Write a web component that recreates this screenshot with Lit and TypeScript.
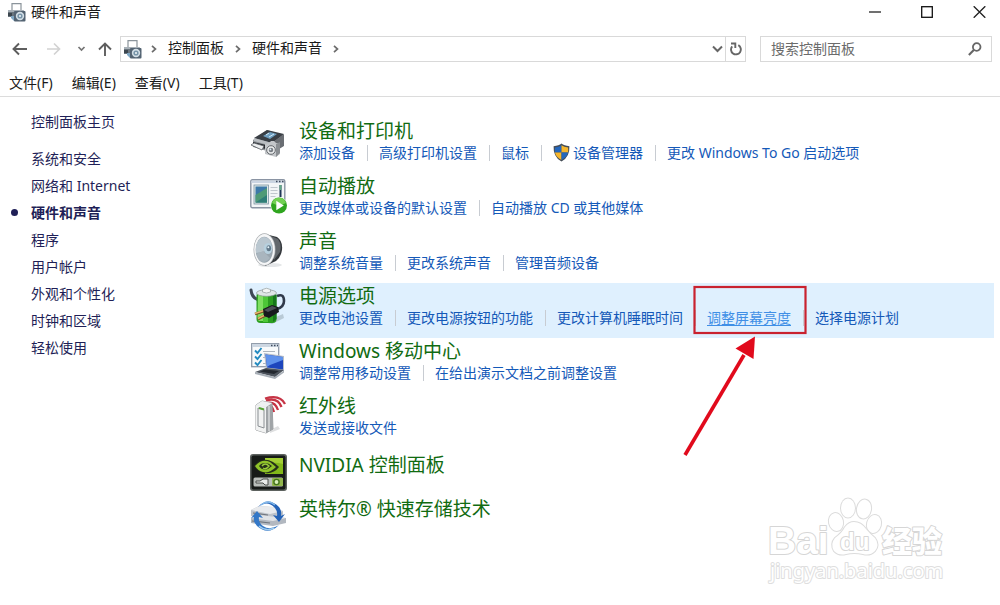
import { LitElement, html, css, svg, nothing } from "lit";
import { customElement, property } from "lit/decorators.js";

interface Task {
  label: string;
  shield?: boolean;
  marked?: boolean;
}
interface Category {
  icon: string;
  title: string;
  tasks: Task[];
}

const categories: Category[] = [
  {
    icon: "devices",
    title: "设备和打印机",
    tasks: [
      { label: "添加设备" },
      { label: "高级打印机设置" },
      { label: "鼠标" },
      { label: "设备管理器", shield: true },
      { label: "更改 Windows To Go 启动选项" },
    ],
  },
  {
    icon: "autoplay",
    title: "自动播放",
    tasks: [{ label: "更改媒体或设备的默认设置" }, { label: "自动播放 CD 或其他媒体" }],
  },
  {
    icon: "sound",
    title: "声音",
    tasks: [{ label: "调整系统音量" }, { label: "更改系统声音" }, { label: "管理音频设备" }],
  },
  {
    icon: "power",
    title: "电源选项",
    tasks: [
      { label: "更改电池设置" },
      { label: "更改电源按钮的功能" },
      { label: "更改计算机睡眠时间" },
      { label: "调整屏幕亮度", marked: true },
      { label: "选择电源计划" },
    ],
  },
  {
    icon: "mobility",
    title: "Windows 移动中心",
    tasks: [{ label: "调整常用移动设置" }, { label: "在给出演示文档之前调整设置" }],
  },
  { icon: "infrared", title: "红外线", tasks: [{ label: "发送或接收文件" }] },
  { icon: "nvidia", title: "NVIDIA 控制面板", tasks: [] },
  { icon: "intel", title: "英特尔® 快速存储技术", tasks: [] },
];

const sections = [
  "系统和安全",
  "网络和 Internet",
  "硬件和声音",
  "程序",
  "用户帐户",
  "外观和个性化",
  "时钟和区域",
  "轻松使用",
];

const icons: Record<string, unknown> = {
  devices: svg`<g transform="translate(0 2)">
    <path d="M3 16 17 6 33 11 33 22 24 29 3 23Z" fill="#8d9196"/>
    <path d="M4 14 17 6 34 10 22 19Z" fill="#3a3f45"/>
    <path d="M13 12 20 8 27 10 20 15Z" fill="#6f9fc0"/>
    <path d="M16 11 19 9M19 13 24 10" stroke="#d4ebf7" stroke-width="1"/>
    <path d="M4 14 22 19V22L4 17Z" fill="#b9bdc1"/>
    <path d="M22 19 34 10V22L22 29Z" fill="#6a6e73"/>
    <path d="M3 18 16 21V25L3 22Z" fill="#24272b"/>
    <path d="M1 21 4 19 14 22 12 26Z" fill="#eceeef" stroke="#5c6064" stroke-width=".8"/>
    <path d="M15 20 19 19 21 17 24 17 26 19 30 19V30L26 33 15 30Z" fill="#c3c6c9"/>
    <path d="M26 20 30 18V29L26 33Z" fill="#8a8e92"/>
    <circle cx="21" cy="26" r="4.3" fill="#eceeef" stroke="#63676b"/>
    <circle cx="21" cy="26" r="2.3" fill="#777c82"/>
    <circle cx="20.4" cy="25.4" r=".9" fill="#dceaf3"/></g>`,
  autoplay: svg`
    <rect x=".8" y="2.8" width="34" height="28" rx="1.5" fill="#f3f5f7" stroke="#8a94a3" stroke-width="1.4"/>
    <path d="M1.500 3.500H34V6H1.500Z" fill="#cbd5e2"/>
    <path d="M26 4.500h1.500M29 4.500h1.500M32 4.500h1.500" stroke="#3f4a5c" stroke-width="1.4"/>
    <rect x="4" y="8" width="14.500" height="19" fill="#dfe8e6" stroke="#7c94a2" stroke-width=".8"/>
    <rect x="5.500" y="9.500" width="11.500" height="16" fill="#3d79a8"/>
    <path d="M5.500 25.500V18L17 11V25.500Z" fill="#4f9a76"/>
    <path d="M5.500 25.500 17 18V25.500Z" fill="#2f7d77"/>
    <path d="M20.500 10.500h7M20.500 13.500h7M20.500 16.500h7M20.500 19.500h5" stroke="#c1c7ce"/>
    <path d="M30.500 8V20" stroke="#1f3657" stroke-width="2"/>
    <path d="M30.500 8V13" stroke="#62a887" stroke-width="2"/>
    <circle cx="29" cy="28.500" r="8.500" fill="#fff"/>
    <circle cx="29" cy="28.500" r="8" fill="#2fa51f"/>
    <path d="M22 26a7.300 7.300 0 0 1 14 0Q29 30 22 26Z" fill="#72d053"/>
    <path d="M26.300 23.800V33.200L33.800 28.500Z" fill="#fff"/>`,
  sound: svg`
    <ellipse cx="20" cy="33" rx="12" ry="2" fill="#e4e6e8"/>
    <path d="M15 2 27 5Q33 9 32 18 31 25 26 29L15 34Z" fill="#34383c"/>
    <path d="M21 4 28 7Q32 12 30 20L24 28Z" fill="#62676c"/>
    <ellipse cx="14.500" cy="17.500" rx="11" ry="16.200" fill="#a9adb0"/>
    <ellipse cx="14.500" cy="17.500" rx="10.300" ry="15.400" fill="#f5f6f7"/>
    <ellipse cx="14.300" cy="17.700" rx="8.600" ry="13" fill="#99a5ae"/>
    <path d="M6 14Q9 5 14 5T22 12L13 20 6 21Z" fill="#bac7d0"/>
    <path d="M6 22 13 19 20 26Q14 33 9 28Z" fill="#a9b5be"/>
    <ellipse cx="18" cy="16.500" rx="4.200" ry="5.600" fill="#b7d0de"/>
    <ellipse cx="18.800" cy="16.200" rx="2.300" ry="3" fill="#63798a"/>
    <circle cx="18.300" cy="15.300" r="1" fill="#e6f5fc"/>`,
  power: svg`
    <path d="M14 35 33 27 34 31 22 37Z" fill="#b9cad6"/>
    <path d="M1 3Q2 12 10 13" fill="none" stroke="#3e4855" stroke-width="3" stroke-linecap="round"/>
    <path d="M27 9Q34 6 34 14 34 20 27 22" fill="none" stroke="#30394a" stroke-width="2.600"/>
    <rect x="6.500" y="5" width="20" height="31" rx="4" fill="#2b9e20"/>
    <path d="M8 8H13V34H9Q7.500 33 7.500 30Z" fill="#7fdf62"/>
    <path d="M13 8H18V35H13Z" fill="#4dc738"/>
    <path d="M23 8H26.500V32L23 35Z" fill="#16771a"/>
    <ellipse cx="16.500" cy="6" rx="10" ry="3.300" fill="#dfe6e6" stroke="#8b9696" stroke-width=".7"/>
    <path d="M12.500 5V2.500Q16.500 0 20.500 2.500V5Q16.500 7 12.500 5Z" fill="#f4f6f6" stroke="#929c9c" stroke-width=".7"/>
    <path d="M5 27 14 24M8 32 16 28" stroke="#7b4c22" stroke-width="2.800"/>
    <path d="M5 26.500 14 23.500M8 31.500 16 27.500" stroke="#e4b56c" stroke-width="1.600"/>
    <path d="M13 22 22 18 28 20 29 25 19 31 14 29Z" fill="#17191d"/>
    <path d="M14 23 22 19 27 21 18 25Z" fill="#4b5057"/>`,
  mobility: svg`
    <rect x="1.700" y="1.700" width="27" height="23" fill="#f8fafb" stroke="#8e99a8" stroke-width="1.300"/>
    <path d="M2 2H28.500V5H2Z" fill="#ccd6e1"/>
    <path d="M21 3.500h1.500M24 3.500h1.500M27 3.500h1" stroke="#3f4a5c" stroke-width="1.300"/>
    <path d="M13 9.500H25M13 15.500H22M13 21.500H20" stroke="#adb5be"/>
    <path d="M5 8.500 7.500 11 11.500 6M5 14.500 7.500 17 11.500 12M5 20.500 7.500 23 11.500 18" fill="none" stroke="#238ac0" stroke-width="1.900"/>
    <path d="M14 11 34 14V29L16 27Z" fill="#b9bfc7"/>
    <path d="M15.500 12.500 33 15V27.500L17 25.500Z" fill="#1d45bd"/>
    <path d="M15.500 12.500 33 15V18L20 23 17 25Z" fill="#5f92ec"/>
    <path d="M16 26 34 28 25 35 5 30Z" fill="#4c535c"/>
    <path d="M15 27.500 29 29 24 32 10 29.500Z" fill="#23282f"/>
    <path d="M5 30 25 35 34 28.500V30.500L25 37 5 32Z" fill="#a8afb7"/>`,
  infrared: svg`
    <path d="M20 33 28 29 30 32 20 36Z" fill="#dedfe0"/>
    <path d="M19 9Q22 8 24 15M17 6Q25 4 28 13M16 3.500Q28 0 31.500 10M15 1.500Q30-3 35 7" fill="none" stroke="#c63445" stroke-width="2.300"/>
    <path d="M6 8 12 4 22 6 23 32 16 36 6 33Z" fill="#d9dbdc" stroke="#85898c" stroke-width=".8"/>
    <path d="M6 8 16 10V36L6 33Z" fill="#f1f2f2"/>
    <path d="M16 10 22 6 23 32 16 36Z" fill="#a0a4a7"/>
    <path d="M19 9V34" stroke="#d6d8da" stroke-width="1.500"/>
    <path d="M6 8 12 4 22 6 16 10Z" fill="#eff1f2"/>
    <path d="M8 11 14 12.500V31L8 29Z" fill="none" stroke="#8b9094"/>
    <path d="M9 11 14 12.500" stroke="#56a434" stroke-width="2"/>`,
  nvidia: svg`
    <rect width="37" height="37" rx="3" fill="#5d625f"/>
    <rect x="1.500" y="1.500" width="34" height="34" rx="2" fill="#171b18"/>
    <path d="M15 4H33V20H15Z" fill="#83b81a"/>
    <path d="M15 4H33V10Q23 7 15 11Z" fill="#a3cf35"/>
    <path d="M4 12Q12 2 23 8 26 10 29 13 24 20 15 19 8 18 4 12Z" fill="#253019"/>
    <path d="M5 12Q12 4 20 8L26 13Q19 20 13 18 8 17 5 12ZM9 12Q12 17 18 15L22 12Q17 7 11 10Z" fill="#8fc329" fill-rule="evenodd"/>
    <path d="M12 12Q15 8 19 12 16 16 13 14" fill="none" stroke="#9ace3a" stroke-width="1.400"/>
    <rect x="3.500" y="23.500" width="29.500" height="9" rx="1.500" fill="#b9beba"/>
    <rect x="22" y="24" width="11" height="8" rx="1" fill="#92b64d"/>
    <path d="M6 27H10L13 25H18V31H15L13 29H6Z" fill="#e9ecea" stroke="#4a4e4b"/>
    <circle cx="26.500" cy="28" r="2.600" fill="#d8eeb7" stroke="#43721b" stroke-width="1.400"/>`,
  intel: svg`<g transform="translate(0 2)">
    <path d="M1 10 9 6 23 7 33 11V16L22 19 1 16Z" fill="#bec3ca"/>
    <path d="M1 10 9 6 23 7 33 11 20 14Z" fill="#e8eaed"/>
    <path d="M1 18 9 15 36 18V23L23 26 1 23Z" fill="#b2b8c0"/>
    <path d="M1 18 9 15 36 18 23 21Z" fill="#e0e3e7"/>
    <path d="M2 21 20 23M3 13 18 15" stroke="#70767e" stroke-width="1.200"/>
    <path d="M8 7Q18-4 29 7 32 11 31 16L35 14 29 22 23 15 27 16Q28 11 24 7 17 0 8 7Z" fill="#2563b7"/>
    <path d="M11 5Q18-1 25 5" fill="none" stroke="#83b9eb" stroke-width="1.400"/>
    <path d="M29 25Q18 36 7 26 3 22 4 17L1 18 7 11 13 18 9 17Q8 22 13 26 20 31 29 25Z" fill="#3478c7"/>
    <path d="M9 26Q16 32 24 28" fill="none" stroke="#a0cdef" stroke-width="1.400"/></g>`,
};

const printerIcon = html`<svg class="app-icon" viewBox="0 0 19 19" width="19" height="19" aria-hidden="true">
  <path d="M5 7V.7H14V7" fill="#fff" stroke="#8b949b" stroke-width="1.200"/>
  <path d="M1 7H16L18 9V14H1Z" fill="#69747d"/>
  <path d="M1 7H16V9H1Z" fill="#a7b0b7"/>
  <path d="M1 10H5V13H1Z" fill="#3c464e"/>
  <path d="M4 13H8V18H4Z" fill="#7ea6c3"/>
  <path d="M4 15 7 18H4Z" fill="#fff"/>
  <rect x="7" y="8" width="11.500" height="10.500" rx="1" fill="#536372"/>
  <circle cx="13" cy="13" r="4.200" fill="#d2dee6"/>
  <circle cx="13" cy="13" r="2.600" fill="#7895a9"/>
  <circle cx="13" cy="13" r="1" fill="#f1f7fa"/>
</svg>`;

const crumbArrow = html`<svg class="crumb-arrow" viewBox="0 0 6 8" width="6" height="8" aria-hidden="true">
  <path d="M1 .8 4.500 4 1 7.200" fill="none" stroke="#6c6c6c" stroke-width="1.700"/>
</svg>`;

const shieldIcon = html`<svg class="shield" viewBox="0 0 17 19" width="17" height="19" aria-hidden="true">
  <path d="M8.500.6Q11 3 16.400 3.200 17 14 8.500 18.400 0 14 .6 3.200 6 3 8.500.6Z" fill="#454d57"/>
  <path d="M8.500 2.200V9.500H1.900Q1.700 7 1.900 4.500 6 4 8.500 2.200Z" fill="#2467bd"/>
  <path d="M8.500 2.200Q11 4 15.100 4.500 15.300 7 15.100 9.500H8.500Z" fill="#f6b62c"/>
  <path d="M1.900 9.500H8.500V17Q3 14 1.900 9.500Z" fill="#f6b62c"/>
  <path d="M8.500 9.500H15.100Q14 14 8.500 17Z" fill="#2467bd"/>
</svg>`;

@customElement("title-bar")
class TitleBar extends LitElement {
  static styles = css`
    :host { display: flex; justify-content: space-between; height: 24px; padding: 0 7px; }
    .caption { display: flex; align-items: center; gap: 5px; margin: 0; font-size: 14px; line-height: 24px; height: 24px; font-weight: 400; }
    .controls { display: flex; }
    .control { width: 52px; border: 0; padding: 0; background: none; display: grid; place-items: center; }
    .control:last-child { width: 28px; margin-left: 12px; }
  `;
  render() {
    return html`
      <h1 class="caption">${printerIcon}硬件和声音</h1>
      <div class="controls">
        <button class="control" aria-label="最小化">
          <svg width="12" height="12" viewBox="0 0 12 12"><path d="M0 6H12" stroke="#222" stroke-width="1.300"/></svg>
        </button>
        <button class="control" aria-label="最大化">
          <svg width="12" height="12" viewBox="0 0 12 12"><rect x=".7" y=".7" width="10.600" height="10.600" fill="none" stroke="#111" stroke-width="1.300"/></svg>
        </button>
        <button class="control" aria-label="关闭">
          <svg width="13" height="12" viewBox="0 0 13 12"><path d="M.7.2 12.300 11.800M12.300.2.7 11.800" stroke="#222" stroke-width="1.300"/></svg>
        </button>
      </div>
    `;
  }
}

@customElement("address-row")
class AddressRow extends LitElement {
  static styles = css`
    :host { display: flex; align-items: center; padding: 12px 8px 0 12px; }
    button { border: 0; padding: 0; background: none; display: grid; place-items: center; }
    .history { display: grid; grid-template-columns: 34px 24px 24px 26px; height: 26px; }
    .history button { justify-items: start; }
    .address {
      flex: 1; display: flex; align-items: center; box-sizing: border-box; height: 26px;
      border: 1px solid #d9d9d9; padding-left: 2px; margin-right: 14px;
    }
    .crumbs { flex: 1; display: flex; align-items: center; gap: 11px; }
    .crumbs a { color: #1a1a1a; text-decoration: none; line-height: 22px; height: 24px; padding-right: 2px; }
    .crumb-arrow { margin-left: -2px; }
    .drop { width: 16px; height: 24px; }
    .refresh { width: 20px; height: 24px; border-left: 1px solid #d9d9d9; }
    .search {
      display: flex; align-items: center; justify-content: space-between; box-sizing: border-box;
      width: 232px; height: 26px; border: 1px solid #d9d9d9; padding: 0 9px 0 10px;
    }
    .search input {
      flex: 1; min-width: 0; border: 0; padding: 0; outline: 0; background: none;
      font: inherit; line-height: 20px; color: #333;
    }
    .search input::placeholder { color: #6b6b6b; opacity: 1; }
  `;
  render() {
    return html`
      <nav class="history" aria-label="导航">
        <button aria-label="后退">
          <svg width="15" height="14" viewBox="0 0 15 14"><path d="M15 7H1.500M7 1.500 1.500 7 7 12.500" fill="none" stroke="#5e5e5e" stroke-width="1.900"/></svg>
        </button>
        <button aria-label="前进">
          <svg width="15" height="14" viewBox="0 0 15 14"><path d="M1 7H13.500M8 1.500 13.500 7 8 12.500" fill="none" stroke="#d2d2d2" stroke-width="1.700"/></svg>
        </button>
        <button aria-label="最近浏览的位置">
          <svg width="16" height="6" viewBox="0 0 16 6"><path d="M8.500 1 11.500 4 14.500 1" fill="none" stroke="#757575" stroke-width="1.700"/></svg>
        </button>
        <button aria-label="上移">
          <svg width="22" height="14" viewBox="0 0 22 14"><path d="M11 14V1.500M5 7.500 11 1.500 17 7.500" fill="none" stroke="#5e5e5e" stroke-width="1.900"/></svg>
        </button>
      </nav>
      <div class="address">
        <nav class="crumbs" aria-label="地址">
          ${printerIcon}${crumbArrow}<a href="#">控制面板</a>${crumbArrow}<a href="#">硬件和声音</a>${crumbArrow}
        </nav>
        <button class="drop" aria-label="以前的位置">
          <svg width="11" height="8" viewBox="0 0 11 8"><path d="M1 1.500 5.500 6 10 1.500" fill="none" stroke="#666" stroke-width="2"/></svg>
        </button>
        <button class="refresh" aria-label="刷新">
          <svg width="13" height="14" viewBox="0 0 13 14"><path d="M9.300 3.200A4.900 4.900 0 1 1 3.200 4.300M2 1.500H6.300V6" fill="none" stroke="#666" stroke-width="1.900"/></svg>
        </button>
      </div>
      <label class="search">
        <input type="search" placeholder="搜索控制面板" aria-label="搜索控制面板" />
        <svg width="14" height="14" viewBox="0 0 14 14"><circle cx="8.700" cy="5" r="3.800" fill="none" stroke="#666" stroke-width="1.800"/><path d="M6 7.800.9 13" stroke="#666" stroke-width="2.100"/></svg>
      </label>
    `;
  }
}

@customElement("section-list")
class SectionList extends LitElement {
  static styles = css`
    :host { display: block; padding-left: 31px; line-height: 27px; }
    a { color: #1f1f57; text-decoration: none; }
    .home { display: block; margin: 11px 0 10px; }
    ul { list-style: none; margin: 0; padding: 0; }
    .current { font-weight: 700; position: relative; }
    .current::before {
      content: ""; position: absolute; left: -20px; top: 10px; width: 7px; height: 7px;
      border-radius: 50%; background: #1f1f57;
    }
  `;
  render() {
    return html`
      <a class="home" href="#">控制面板主页</a>
      <ul>
        ${sections.map(
          (name) => html`<li class=${name === "硬件和声音" ? "current" : ""}><a href="#">${name}</a></li>`
        )}
      </ul>
    `;
  }
}

@customElement("category-row")
class CategoryRow extends LitElement {
  @property({ attribute: false }) category!: Category;
  static styles = css`
    :host { display: block; }
    .row { display: grid; grid-template-columns: 37px 1fr; column-gap: 12px; padding: 2px 0 9px 5px; }
    .row .icon { padding-top: 2px; }
    .single { padding: 6px 0 16px 5px; }
    .single .icon { padding-top: 0; }
    .selected { background: #dff0fe; }
    .icon { height: 0; overflow: visible; }
    .icon svg { display: block; overflow: visible; }
    h2 { margin: 0; font-size: 19px; line-height: 22px; font-weight: 400; }
    h2 a { color: #116b11; text-decoration: none; }
    .tasks { display: flex; margin: 0; padding: 0; list-style: none; line-height: 22px; white-space: nowrap; }
    .tasks li { display: flex; align-items: center; }
    .tasks li + li::before { content: ""; width: 1px; height: 16px; margin: 0 11px 0 12px; background: #c8ccd2; }
    .tasks a { display: flex; align-items: center; gap: 3px; color: #1459b8; text-decoration: none; }
    .shield { margin-top: -2px; }
    .marked { position: relative; }
    .tasks .marked a { color: #3f8fe6; text-decoration: underline; text-underline-offset: 2px; }
    .callout { position: absolute; left: 0; top: -21px; pointer-events: none; overflow: visible; z-index: 1; }
  `;
  render() {
    const { icon, title, tasks } = this.category;
    const selected = tasks.some((t) => t.marked);
    return html`
      <section class="row ${tasks.length ? "" : "single"} ${selected ? "selected" : ""}">
        <div class="icon">
          <svg width="37" height="37" viewBox="0 0 37 37" aria-hidden="true">${icons[icon]}</svg>
        </div>
        <div>
          <h2><a href="#">${title}</a></h2>
          ${tasks.length
            ? html`<ul class="tasks">
                ${tasks.map(
                  (t) => html`<li class=${t.marked ? "marked" : ""}>
                    <a href="#">${t.shield ? shieldIcon : nothing}${t.label}</a>
                    ${t.marked
                      ? html`<svg class="callout" width="126" height="172" viewBox="0 0 126 172" aria-hidden="true">
                          <rect x="11.500" y="1" width="111" height="46" fill="none" stroke="#c9222f" stroke-width="2.200"/>
                          <path d="M2 169 61 69" stroke="#e10a1c" stroke-width="3.600"/>
                          <path d="M72 50.500 70.500 73 52.500 62.500Z" fill="#e10a1c"/>
                        </svg>`
                      : nothing}
                  </li>`
                )}
              </ul>`
            : nothing}
        </div>
      </section>
    `;
  }
}

@customElement("site-watermark")
class SiteWatermark extends LitElement {
  static styles = css`
    :host { position: absolute; right: 50px; bottom: 20px; pointer-events: none; }
    svg { display: block; }
    text, .paw { fill: #fff; stroke: #d6d6d6; stroke-width: 2px; paint-order: stroke; stroke-linejoin: round; }
    .paw { stroke: #dcdcdc; }
    .latin { font: bold 39px "Liberation Sans", sans-serif; }
    .inner { font: bold 24px "Liberation Sans", sans-serif; }
    .han { font: 900 30px "Noto Sans CJK SC", sans-serif; }
    .domain { font: 20px "Noto Sans", sans-serif; stroke: #dedede; }
  `;
  render() {
    return html`<svg width="184" height="92" viewBox="0 4 184 92" aria-hidden="true">
      <ellipse class="paw" cx="70" cy="33" rx="7" ry="9" transform="rotate(-12 70 33)"/>
      <ellipse class="paw" cx="82" cy="19" rx="7" ry="9.500"/>
      <ellipse class="paw" cx="98" cy="20" rx="7" ry="9.500" transform="rotate(10 98 20)"/>
      <ellipse class="paw" cx="108" cy="35" rx="7" ry="9" transform="rotate(15 108 35)"/>
      <path class="paw" d="M88 33Q95 33 100 40 104 45 109 49 114 56 109 62 104 67 97 65 88 63 80 65 73 67 68 62 64 55 69 49 76 44 79 38 83 33 88 33Z"/>
      <text class="latin" x="2" y="65">Bai</text>
      <text class="inner" x="74" y="61">du</text>
      <text class="han" x="116" y="63">经验</text>
      <text class="domain" x="4" y="89">jingyan.baidu.com</text>
    </svg>`;
  }
}

@customElement("app-root")
class AppRoot extends LitElement {
  static styles = css`
    :host {
      display: block; position: relative; min-height: 100vh; box-sizing: border-box; background: #fff;
      color: #1a1a1a; font-family: "Noto Sans", "Noto Sans CJK SC", sans-serif; font-size: 14px;
      overflow: hidden;
    }
    .menu {
      display: flex; gap: 19px; padding: 10px 9px 0; height: 24px;
      border-bottom: 1px solid #dcdcdc;
    }
    .menu button { border: 0; padding: 0; background: none; color: inherit; font: inherit; line-height: 22px; height: 22px; }
    .body { display: grid; grid-template-columns: 245px 1fr; padding-right: 6px; }
    .categories { padding-top: 21px; }
  `;
  render() {
    return html`
      <title-bar></title-bar>
      <address-row></address-row>
      <div class="menu" role="menubar">
        ${["文件(F)", "编辑(E)", "查看(V)", "工具(T)"].map((m) => html`<button role="menuitem">${m}</button>`)}
      </div>
      <div class="body">
        <section-list></section-list>
        <main class="categories">
          ${categories.map((c) => html`<category-row .category=${c}></category-row>`)}
        </main>
      </div>
      <site-watermark></site-watermark>
    `;
  }
}
